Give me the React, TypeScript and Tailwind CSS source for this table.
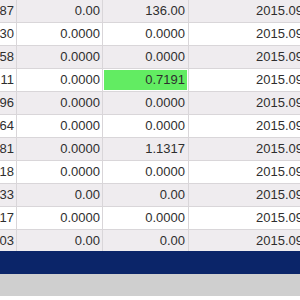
const rows = [
  ["87", "0.00", "136.00", false],
  ["30", "0.0000", "0.0000", false],
  ["58", "0.0000", "0.0000", false],
  ["11", "0.0000", "0.7191", true],
  ["96", "0.0000", "0.0000", false],
  ["64", "0.0000", "0.0000", false],
  ["81", "0.0000", "1.1317", false],
  ["18", "0.0000", "0.0000", false],
  ["33", "0.00", "0.00", false],
  ["17", "0.0000", "0.0000", false],
  ["03", "0.00", "0.00", false],
] as const

export default function App() {
  return (
    <div className="h-[300px] w-[300px] overflow-hidden bg-white font-['Liberation_Sans',sans-serif] text-[13px] text-[#2e2e2e]">
      <div>
        {rows.map(([id, swap, profit, hit], i) => (
          <div
            key={i}
            className={`flex ${i === rows.length - 1 ? "h-[21px]" : "h-[23px] border-b border-[#d9d6d9]"} ${i % 2 === 0 ? "bg-[#efecef]" : "bg-white"}`}
          >
            <div className="flex w-[17px] shrink-0 items-center justify-end border-r border-[#d9d6d9] pr-[2px]">
              {id}
            </div>
            <div className="flex w-[86px] shrink-0 items-center justify-end border-r border-[#d9d6d9] pr-[2px]">
              {swap}
            </div>
            <div className="flex w-[86px] shrink-0 items-center border-r border-[#d9d6d9] p-px">
              <div className={`flex h-full w-full items-center justify-end pr-[2px] ${hit ? "bg-[#62ec62]" : ""}`}>
                {profit}
              </div>
            </div>
            <div className="flex flex-1 items-center overflow-hidden whitespace-nowrap pl-[67px]">
              2015.09.14 08:00
            </div>
          </div>
        ))}
      </div>
      <div className="h-[23px] bg-[#0b2569]" />
      <div className="h-[22px] bg-[#cfcfcf]" />
    </div>
  )
}
